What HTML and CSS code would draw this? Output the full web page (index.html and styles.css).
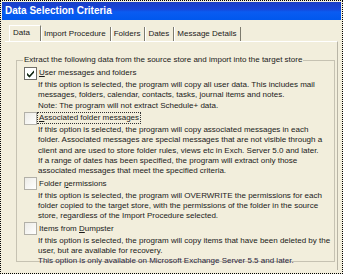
FILE: index.html
```html
<!DOCTYPE html>
<html lang="en">
<head>
  <meta charset="UTF-8">
  <title>Data Selection Criteria</title>
  <link rel="stylesheet" href="styles.css">
</head>
<body>

  <div class="window">
    <div class="titlebar">Data Selection Criteria</div>

    <!-- Tab strip -->
    <div class="tabs">
      <div class="tab selected">Data</div>
      <div class="tab">Import Procedure</div>
      <div class="tab">Folders</div>
      <div class="tab">Dates</div>
      <div class="tab">Message Details</div>
    </div>

    <div class="panel">
      <fieldset class="group">
        <legend>Extract the following data from the source store and import into the target store</legend>

        <div class="option">
          <div class="option-head">
            <span class="check checked">
              <svg width="9" height="9" viewBox="0 0 9 9"><path d="M1 4 L3.5 6.5 L8 1.5 L8 3.5 L3.5 8.5 L1 6 Z" fill="#21a121"/><path d="M1 4 L3.5 6.5 L8 1.5 L8 3.5 L3.5 8.5 L1 6 Z" fill="#1a1a1a"/></svg>
            </span>
            <span class="label"><u>U</u>ser messages and folders</span>
          </div>
          <div class="desc">
            If this option is selected, the program will copy all user data. This includes mail<br>
            messages, folders, calendar, contacts, tasks, journal items and notes.<br>
            Note: The program will not extract Schedule+ data.
          </div>
        </div>

        <div class="option">
          <div class="option-head">
            <span class="check"></span>
            <span class="label focused"><u>A</u>ssociated folder messages</span>
          </div>
          <div class="desc">
            If this option is selected, the program will copy associated messages in each<br>
            folder. Associated messages are special messages that are not visible through a<br>
            client and are used to store folder rules, views etc in Exch. Server 5.0 and later.<br>
            If a range of dates has been specified, the program will extract only those<br>
            associated messages that meet the specified criteria.
          </div>
        </div>

        <div class="option">
          <div class="option-head">
            <span class="check"></span>
            <span class="label">Folder <u>p</u>ermissions</span>
          </div>
          <div class="desc">
            If this option is selected, the program will OVERWRITE the permissions for each<br>
            folder copied to the target store, with the permissions of the folder in the source<br>
            store, regardless of the Import Procedure selected.
          </div>
        </div>

        <div class="option">
          <div class="option-head">
            <span class="check"></span>
            <span class="label">Items from <u>D</u>umpster</span>
          </div>
          <div class="desc">
            If this option is selected, the program will copy items that have been deleted by the<br>
            user, but are available for recovery.<br>
            <span class="note">This option is only available on Microsoft Exchange Server 5.5 and later.</span>
          </div>
        </div>
      </fieldset>
    </div>
  </div>

</body>
</html>
```

FILE: styles.css
```css
body {
  margin: 0;
  font-family: "Liberation Sans", Arial, sans-serif;
  font-size: 8px;
  color: #1a1a1a;
  background: #fff;
}
.window {
  width: 343px;
  height: 274px;
  box-sizing: border-box;
  border: 1px dotted #000;
  background: #f2eedc;
  overflow: hidden;
}
.titlebar {
  margin: 1px 1px 0;
  height: 18px;
  padding-left: 3px;
  line-height: 17px;
  font-size: 10px;
  font-weight: bold;
  color: #fff;
  background: linear-gradient(#1b3fc8 0%, #1746d8 40%, #0a5cf2 55%, #0058ee 100%);
}
.tabs {
  display: flex;
  align-items: flex-end;
  margin: 5px 0 0 8px;
  height: 16px;
}
.tab {
  height: 14px;
  line-height: 14px;
  padding: 0 4px 0 3px;
  border-right: 1px solid #7d7b6e;
  box-shadow: inset 1px 0 0 #fff;
}
.tab.selected {
  height: 15px;
  padding: 0 10px 0 3px;
  border-top: 1px solid #fff;
  border-left: 1px solid #fff;
  box-shadow: none;
}
.panel {
  margin: 0 4px;
  height: 229px;
  box-sizing: border-box;
  border-top: 1px solid #fff;
  border-right: 1px solid #b9b5a6;
  padding: 0 2px 0 11px;
}
.group {
  margin: 13px 0 0;
  padding: 2px 0 0 6px;
  height: 207px;
  box-sizing: border-box;
  border: 1px solid #c6c2b2;
  min-width: 0;
}
.group legend {
  padding: 0 1px;
  line-height: 10px;
  white-space: nowrap;
}
.option {
  margin-bottom: 1.2px;
}
.option-head {
  display: flex;
  align-items: center;
  height: 12px;
  margin-left: 1px;
}
.check {
  width: 11px;
  height: 11px;
  border: 1px solid #b2b0a8;
  background: linear-gradient(135deg, #ecebe6, #fff);
  display: flex;
  align-items: center;
  justify-content: center;
}
.check.checked {
  border-color: #6f6e68;
  background: #fff;
}
.label {
  padding: 0 1px;
  border: 1px dotted transparent;
  line-height: 10px;
}
.label.focused {
  border-color: #333;
}
.desc {
  margin-left: 15px;
  padding-top: 1px;
  line-height: 10.3px;
  white-space: nowrap;
}
.note {
  color: #2a1f3c;
}
```
